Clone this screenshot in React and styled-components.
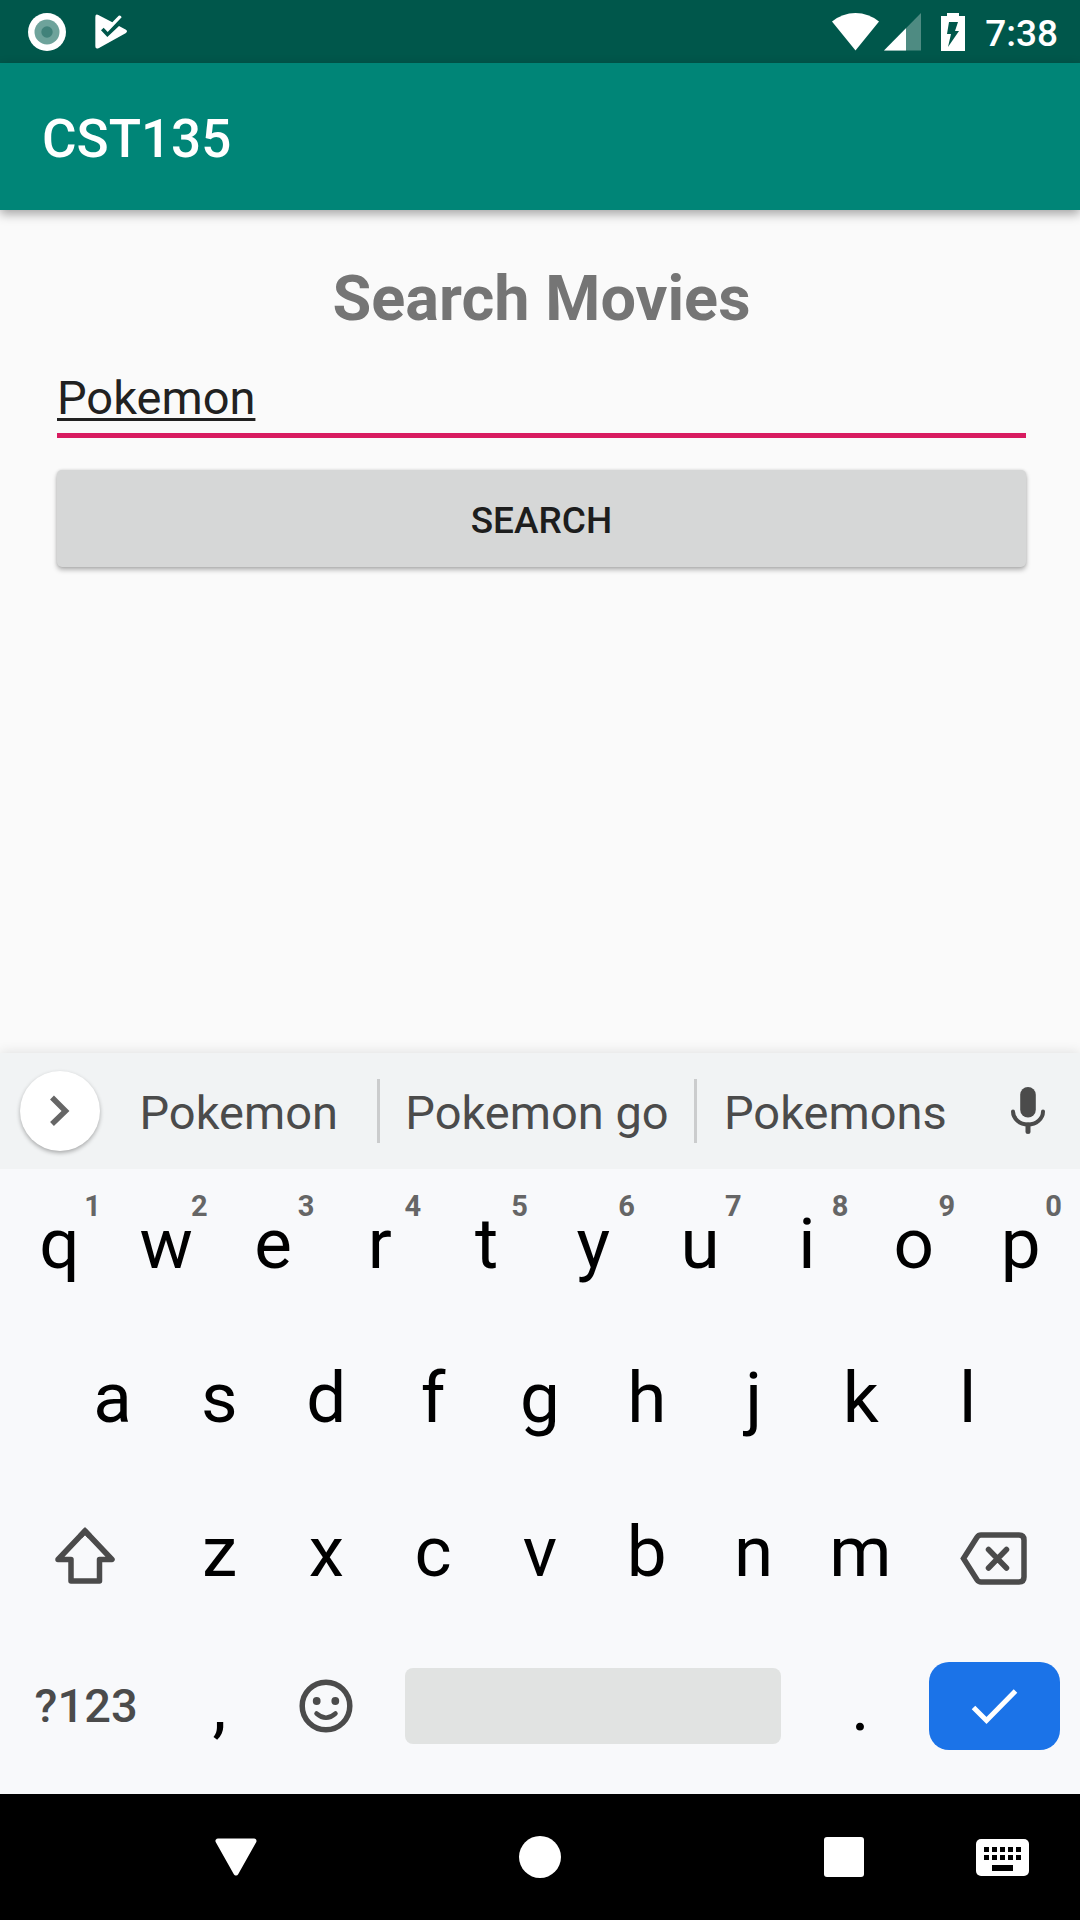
import React, { useState } from "react";
import styled, { createGlobalStyle } from "styled-components";

const GlobalStyle = createGlobalStyle`
  *, *::before, *::after { box-sizing: border-box; }
  body {
    margin: 0;
    background: #fafafa;
    font-family: Roboto, "Noto Sans", sans-serif;
  }
  button, input {
    font-family: inherit;
    margin: 0;
    padding: 0;
    border: 0;
    border-radius: 0;
    background: none;
    outline: none;
  }
  svg { display: block; flex: none; }
`;

const Screen = styled.div`
  display: flex;
  flex-direction: column;
  min-height: 100vh;
`;

const StatusBar = styled.div`
  display: flex;
  align-items: center;
  justify-content: space-between;
  height: 63px;
  padding: 0 22px 0 28px;
  background: #00574b;
`;

const StatusGroup = styled.div`
  display: flex;
  align-items: center;
  gap: ${(p) => p.$gap}px;
`;

const Clock = styled.time`
  padding-top: 4px;
  color: #fff;
  font-size: 37px;
  line-height: 44px;
  font-weight: 500;
`;

const AppBar = styled.header`
  position: relative;
  display: flex;
  align-items: center;
  height: 147px;
  padding: 5px 42px 0;
  background: #008577;
  box-shadow: 0 4px 10px rgba(0, 0, 0, 0.35);
`;

const AppTitle = styled.h1`
  margin: 0;
  color: #fff;
  font-size: 53px;
  line-height: 62px;
  font-weight: 500;
`;

const Content = styled.main`
  flex: 1;
  display: flex;
  flex-direction: column;
  padding: 52px 54px 52px 57px;
`;

const Heading = styled.h2`
  margin: 0 0 34px;
  color: #757575;
  font-size: 63px;
  line-height: 74px;
  font-weight: 700;
  text-align: center;
`;

const Form = styled.form`
  display: flex;
  flex-direction: column;
  gap: 32px;
`;

const SearchInput = styled.input`
  width: 100%;
  height: 68px;
  padding-bottom: 9px;
  border-bottom: 5px solid #d81b60;
  color: #212121;
  font-size: 47px;
  line-height: 54px;
  text-decoration: underline;
  text-decoration-thickness: 3px;
  text-underline-offset: 4px;
  text-decoration-skip-ink: none;
`;

const SearchButton = styled.button`
  height: 97px;
  padding-top: 4px;
  border-radius: 5px;
  background: #d6d7d7;
  box-shadow: 0 3px 5px rgba(0, 0, 0, 0.28), 0 0 3px rgba(0, 0, 0, 0.14);
  color: #1d1d1d;
  font-size: 37px;
  line-height: 44px;
  font-weight: 500;
  text-transform: uppercase;
`;

const Keyboard = styled.section`
  background: #f8f9fb;
  box-shadow: 0 0 12px rgba(0, 0, 0, 0.12);
`;

const Strip = styled.div`
  display: flex;
  align-items: center;
  height: 116px;
  padding: 0 32px 0 20px;
  background: #f1f3f4;
`;

const Expand = styled.button`
  display: flex;
  align-items: center;
  justify-content: center;
  flex: none;
  width: 80px;
  height: 80px;
  border-radius: 50%;
  background: #fff;
  box-shadow: 0 2px 4px rgba(0, 0, 0, 0.3);
`;

const Suggestions = styled.div`
  flex: 1;
  display: grid;
  grid-template-columns: 139fr 3px 157fr 3px 139fr;
  align-items: center;
  margin-right: 34px;
`;

const Suggestion = styled.button`
  padding-top: 4px;
  color: #4b4b4b;
  font-size: 47px;
  line-height: 56px;
  white-space: nowrap;
`;

const Divider = styled.span`
  height: 64px;
  background: #cbcccd;
`;

const IconButton = styled.button`
  display: flex;
  align-items: center;
  justify-content: center;
`;

const Keys = styled.div`
  display: flex;
  flex-direction: column;
  gap: 4px;
  padding-bottom: 13px;
`;

const KeyRow = styled.div`
  display: flex;
  height: 150px;
  padding: 0 ${(p) => p.$inset || 6}px;
`;

const Key = styled.button`
  position: relative;
  display: flex;
  align-items: center;
  justify-content: center;
  flex: ${(p) => p.$span || 1} 1 0;
  min-width: 0;
  color: #000;
  font-size: 71px;
  line-height: 84px;
`;

const ModeKey = styled(Key)`
  color: #4b4b4b;
  font-size: 47px;
  line-height: 56px;
  font-weight: 500;
`;

const Hint = styled.span`
  position: absolute;
  top: 20px;
  right: 12px;
  color: #666;
  font-size: 29px;
  line-height: 34px;
  font-weight: 700;
`;

const SpaceBar = styled.span`
  flex: 1;
  height: 76px;
  margin: 0 26px 0 25px;
  border-radius: 8px;
  background: #e1e3e2;
`;

const EnterCap = styled.span`
  display: flex;
  align-items: center;
  justify-content: center;
  flex: 1;
  height: 88px;
  margin: 0 14px 0 15px;
  border-radius: 20px;
  background: #1b73e8;
`;

const NavBar = styled.nav`
  display: grid;
  grid-template-columns: 156px 160px 1fr 160px 1fr 160px 156px;
  height: 126px;
  background: #000;
`;

const NavButton = styled(IconButton)`
  grid-column: ${(p) => p.$column};
`;

const RecordIcon = () => (
  <svg width="38" height="38" viewBox="0 0 38 38" aria-hidden="true">
    <circle cx="19" cy="19" r="19" fill="#fff" />
    <circle cx="19" cy="19" r="12.500" fill="#6ea39b" />
    <circle cx="19" cy="19" r="5.700" fill="#41827a" />
  </svg>
);

const PlayCheckIcon = () => (
  <svg width="33" height="35" viewBox="285 41 99 105" aria-hidden="true">
    <path
      d="M286 50Q286 40 295 44L337 66L356 46Q362 43 365 51L323 95L311 82L303 90L322 110L357 77L378 88Q384 93 378 98L297 143Q286 148 286 138z"
      fill="#fff"
    />
  </svg>
);

const WifiIcon = () => (
  <svg width="47" height="38" viewBox="0 0 47 38" aria-hidden="true">
    <path d="M0 8.500Q10.500 0 23.500 0T47 8.500L23.500 37.500z" fill="#fff" />
  </svg>
);

const SignalIcon = () => (
  <svg width="37" height="38" viewBox="0 0 37 38" aria-hidden="true">
    <path d="M37 0v37.500H0z" fill="#4e8b82" />
    <path d="M22 15.200v22.300H0z" fill="#fff" />
  </svg>
);

const BatteryIcon = () => (
  <svg width="24" height="38" viewBox="0 0 24 38" aria-hidden="true">
    <path d="M6 0h12v3h6v35H0V3h6z" fill="#fff" />
    <path d="M8 9h9l-3 9h4L7 34l3-13H6z" fill="#00574b" />
  </svg>
);

const ChevronIcon = () => (
  <svg width="24" height="32" viewBox="0 0 24 32" aria-hidden="true">
    <path d="M4 2.500l13.500 13.500L4 29" fill="none" stroke="#666" strokeWidth="5.500" />
  </svg>
);

const MicIcon = () => (
  <svg width="40" height="48" viewBox="0 0 40 48" aria-hidden="true">
    <rect x="12.200" y="0" width="15.600" height="30.500" rx="7.800" fill="#4b4b4b" />
    <g fill="none" stroke="#4b4b4b" strokeLinecap="round">
      <path d="M5 24.500a15 13 0 0 0 30 0" strokeWidth="4" />
      <path d="M20 38v6.500" strokeWidth="5" />
    </g>
  </svg>
);

const ShiftIcon = () => (
  <svg width="64" height="64" viewBox="0 0 64 64" aria-hidden="true">
    <g fill="none" stroke="#4b4b4b" strokeWidth="5.500">
      <path d="M31 11l27 28.500H45.500V61H17V39.500H4z" strokeLinejoin="round" />
      <path d="M26 16.300L31 11l5 5.300" />
    </g>
  </svg>
);

const BackspaceIcon = () => (
  <svg width="72" height="72" viewBox="0 0 72 72" aria-hidden="true">
    <g fill="none" stroke="#4b4b4b" strokeWidth="5.500">
      <path d="M5.500 42.500l13.500-21.300q1.500-2.200 4-2.200H61q5 0 5 5v37q0 5-5 5H23q-2.500 0-4-2.200z" />
      <path d="M30.500 33.500L48.500 52M48.500 33.500L30.500 52" strokeLinecap="round" />
    </g>
  </svg>
);

const EmojiIcon = () => (
  <svg width="54" height="54" viewBox="-27 -27 54 54" aria-hidden="true">
    <circle r="23.800" fill="none" stroke="#4b4b4b" strokeWidth="5.500" />
    <circle cx="-9.300" cy="-5" r="3.900" fill="#4b4b4b" />
    <circle cx="9.300" cy="-5" r="3.900" fill="#4b4b4b" />
    <path d="M-9.500 7.500Q0 16 9.500 7.500" fill="none" stroke="#4b4b4b" strokeWidth="4.500" strokeLinecap="round" />
  </svg>
);

const CheckIcon = () => (
  <svg width="48" height="48" viewBox="0 0 48 48" aria-hidden="true">
    <path d="M3.500 25.500L16.500 38.500L45.500 9" fill="none" stroke="#fff" strokeWidth="5" />
  </svg>
);

const BackIcon = () => (
  <svg width="44" height="40" viewBox="0 0 44 40" aria-hidden="true">
    <path d="M4 4h36L22 36z" fill="#fff" stroke="#fff" strokeWidth="5" strokeLinejoin="round" />
  </svg>
);

const HomeIcon = () => (
  <svg width="42" height="42" viewBox="0 0 42 42" aria-hidden="true">
    <circle cx="21" cy="21" r="21" fill="#fff" />
  </svg>
);

const RecentsIcon = () => (
  <svg width="40" height="40" viewBox="0 0 40 40" aria-hidden="true">
    <rect width="40" height="40" rx="3" fill="#fff" />
  </svg>
);

const KeyboardIcon = () => (
  <svg width="53" height="37" viewBox="0 0 53 37" aria-hidden="true">
    <rect width="53" height="37" rx="5" fill="#fff" />
    {[8, 16].map((y) =>
      [8, 16, 24, 32, 40].map((x) => <rect key={`${x}-${y}`} x={x} y={y} width="5" height="5" />)
    )}
    <rect x="16" y="26" width="21" height="6" />
  </svg>
);

const TOP_ROW = ["q", "w", "e", "r", "t", "y", "u", "i", "o", "p"];
const HOME_ROW = ["a", "s", "d", "f", "g", "h", "j", "k", "l"];
const BOTTOM_ROW = ["z", "x", "c", "v", "b", "n", "m"];

export default function App() {
  const [query, setQuery] = useState("Pokemon");
  const type = (char) => setQuery((value) => value + char);
  const letters = (chars) =>
    chars.map((char) => (
      <Key key={char} type="button" onClick={() => type(char)}>
        {char}
      </Key>
    ));

  return (
    <Screen>
      <GlobalStyle />
      <StatusBar>
        <StatusGroup $gap={29}>
          <RecordIcon />
          <PlayCheckIcon />
        </StatusGroup>
        <StatusGroup $gap={20}>
          <StatusGroup $gap={5}>
            <WifiIcon />
            <SignalIcon />
          </StatusGroup>
          <BatteryIcon />
          <Clock>7:38</Clock>
        </StatusGroup>
      </StatusBar>

      <AppBar>
        <AppTitle>CST135</AppTitle>
      </AppBar>

      <Content>
        <Heading id="search-heading">Search Movies</Heading>
        <Form onSubmit={(event) => event.preventDefault()}>
          <SearchInput
            type="text"
            aria-labelledby="search-heading"
            spellCheck={false}
            value={query}
            onChange={(event) => setQuery(event.target.value)}
          />
          <SearchButton type="submit">Search</SearchButton>
        </Form>
      </Content>

      <Keyboard aria-label="Keyboard">
        <Strip>
          <Expand type="button" aria-label="More">
            <ChevronIcon />
          </Expand>
          <Suggestions>
            <Suggestion type="button" onClick={() => setQuery("Pokemon")}>Pokemon</Suggestion>
            <Divider />
            <Suggestion type="button" onClick={() => setQuery("Pokemon go")}>Pokemon go</Suggestion>
            <Divider />
            <Suggestion type="button" onClick={() => setQuery("Pokemons")}>Pokemons</Suggestion>
          </Suggestions>
          <IconButton type="button" aria-label="Voice input">
            <MicIcon />
          </IconButton>
        </Strip>
        <Keys>
          <KeyRow>
            {TOP_ROW.map((char, index) => (
              <Key key={char} type="button" onClick={() => type(char)}>
                {char}
                <Hint>{(index + 1) % 10}</Hint>
              </Key>
            ))}
          </KeyRow>
          <KeyRow $inset={59}>{letters(HOME_ROW)}</KeyRow>
          <KeyRow>
            <Key type="button" $span={1.5} aria-label="Shift">
              <ShiftIcon />
            </Key>
            {letters(BOTTOM_ROW)}
            <Key
              type="button"
              $span={1.5}
              aria-label="Backspace"
              onClick={() => setQuery((value) => value.slice(0, -1))}
            >
              <BackspaceIcon />
            </Key>
          </KeyRow>
          <KeyRow>
            <ModeKey type="button" $span={1.5}>?123</ModeKey>
            {letters([","])}
            <Key type="button" aria-label="Emoji">
              <EmojiIcon />
            </Key>
            <Key type="button" $span={4} aria-label="Space" onClick={() => type(" ")}>
              <SpaceBar />
            </Key>
            {letters(["."])}
            <Key type="button" $span={1.5} aria-label="Enter">
              <EnterCap>
                <CheckIcon />
              </EnterCap>
            </Key>
          </KeyRow>
        </Keys>
      </Keyboard>

      <NavBar aria-label="System">
        <NavButton type="button" $column={2} aria-label="Back">
          <BackIcon />
        </NavButton>
        <NavButton type="button" $column={4} aria-label="Home">
          <HomeIcon />
        </NavButton>
        <NavButton type="button" $column={6} aria-label="Recent apps">
          <RecentsIcon />
        </NavButton>
        <NavButton type="button" $column={7} aria-label="Switch keyboard">
          <KeyboardIcon />
        </NavButton>
      </NavBar>
    </Screen>
  );
}
